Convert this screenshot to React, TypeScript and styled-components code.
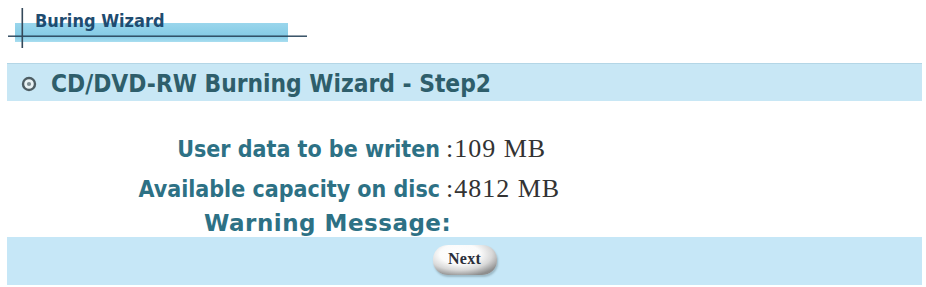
import React from "react";
import styled, { createGlobalStyle } from "styled-components";

const GlobalStyle = createGlobalStyle`
  html, body {
    margin: 0;
    padding: 0;
    background: #ffffff;
  }
  body {
    font-family: "DejaVu Sans Condensed", "DejaVu Sans", sans-serif;
  }
`;

const Page = styled.div`
  width: 926px;
  height: 287px;
  overflow: hidden;
  box-sizing: border-box;
  padding: 0 4px 0 7px;
`;

const Banner = styled.div`
  position: relative;
  height: 63px;
  margin-left: -7px;
  box-sizing: border-box;
  padding: 11px 0 0 35px;
`;

const BannerArt = styled.svg`
  position: absolute;
  left: 0;
  top: 0;
  width: 320px;
  height: 60px;
`;

const BannerTitle = styled.span`
  position: relative;
  display: inline-block;
  font-family: "DejaVu Sans Condensed", "DejaVu Sans", sans-serif;
  font-weight: bold;
  font-size: 18px;
  line-height: 20px;
  color: #1f4c70;
`;

const Panel = styled.div`
  display: flex;
  flex-direction: column;
  width: 915px;
`;

const TitleBar = styled.div`
  display: flex;
  align-items: center;
  gap: 14px;
  height: 38px;
  box-sizing: border-box;
  padding: 3px 0 0 14px;
  background: #c8e7f5;
  border-top: 1px solid #b4d6e6;
`;

const Bullet = styled.svg`
  width: 16px;
  height: 16px;
  flex: none;
`;

const Title = styled.span`
  font-family: "DejaVu Sans Condensed", "DejaVu Sans", sans-serif;
  font-weight: bold;
  font-size: 24.3px;
  line-height: 34px;
  color: #2e5e6b;
`;

const Body = styled.div`
  background: #ffffff;
  padding-top: 28px;
  height: 136px;
  box-sizing: border-box;
`;

const InfoGrid = styled.div`
  display: grid;
  grid-template-columns: 433px auto;
  column-gap: 6px;
  grid-auto-rows: 40px;
`;

const Label = styled.div`
  text-align: right;
  font-family: "DejaVu Sans Condensed", "DejaVu Sans", sans-serif;
  font-weight: bold;
  font-size: 23px;
  line-height: 40px;
  color: #2d7185;
  white-space: nowrap;
`;

const Value = styled.div`
  font-family: "Liberation Serif", "DejaVu Serif", serif;
  font-size: 26px;
  line-height: 40px;
  letter-spacing: 1px;
  color: #333333;
  white-space: nowrap;
`;

const Warning = styled.div`
  grid-column: 1 / span 2;
  padding-left: 197px;
  font-family: "DejaVu Sans", "DejaVu Sans Condensed", sans-serif;
  font-weight: bold;
  font-size: 23px;
  letter-spacing: 0.5px;
  line-height: 28px;
  height: 28px;
  color: #2d7185;
  white-space: nowrap;
`;

const Footer = styled.div`
  display: flex;
  justify-content: center;
  align-items: flex-start;
  height: 48px;
  box-sizing: border-box;
  padding-top: 8px;
  background: #c6e7f7;
`;

const NextButton = styled.button`
  width: 64px;
  height: 30px;
  border: none;
  border-radius: 15px / 14px;
  padding: 0 0 3px 0;
  background: radial-gradient(
    ellipse 70% 75% at 42% 30%,
    #ffffff 0%,
    #fbfbfb 45%,
    #d8d8d8 72%,
    #8e8e8e 100%
  );
  box-shadow: 1px 2px 2px rgba(80, 100, 110, 0.35);
  font-family: "Liberation Serif", "DejaVu Serif", serif;
  font-weight: bold;
  font-size: 16px;
  letter-spacing: 0.3px;
  color: #2a2f3a;
  cursor: pointer;
`;

export default function App() {
  return (
    <>
      <GlobalStyle />
      <Page>
        <Banner>
          <BannerArt viewBox="0 0 320 60" aria-hidden="true">
            <defs>
              <linearGradient id="barGrad" x1="0" y1="0" x2="0" y2="1">
                <stop offset="0" stopColor="#9ad6ec" />
                <stop offset="0.7" stopColor="#84cbe5" />
                <stop offset="1" stopColor="#a9def0" />
              </linearGradient>
            </defs>
            <rect x="15" y="23" width="273" height="19" fill="url(#barGrad)" />
            <rect x="8" y="35.5" width="299" height="1.4" fill="#28445a" />
            <rect x="21.5" y="8" width="1.6" height="40" fill="#34495a" />
          </BannerArt>
          <BannerTitle>Buring Wizard</BannerTitle>
        </Banner>
        <Panel>
          <TitleBar>
            <Bullet viewBox="0 0 16 16" aria-hidden="true">
              <circle cx="8" cy="8" r="6" fill="#e9f2f4" stroke="#4d5d63" strokeWidth="2.4" />
              <circle cx="8" cy="8" r="2.1" fill="#7d8c91" />
            </Bullet>
            <Title>CD/DVD-RW Burning Wizard - Step2</Title>
          </TitleBar>
          <Body>
            <InfoGrid>
              <Label>User data to be writen</Label>
              <Value>:109 MB</Value>
              <Label>Available capacity on disc</Label>
              <Value>:4812 MB</Value>
              <Warning>Warning Message:</Warning>
            </InfoGrid>
          </Body>
          <Footer>
            <NextButton type="button">Next</NextButton>
          </Footer>
        </Panel>
      </Page>
    </>
  );
}
